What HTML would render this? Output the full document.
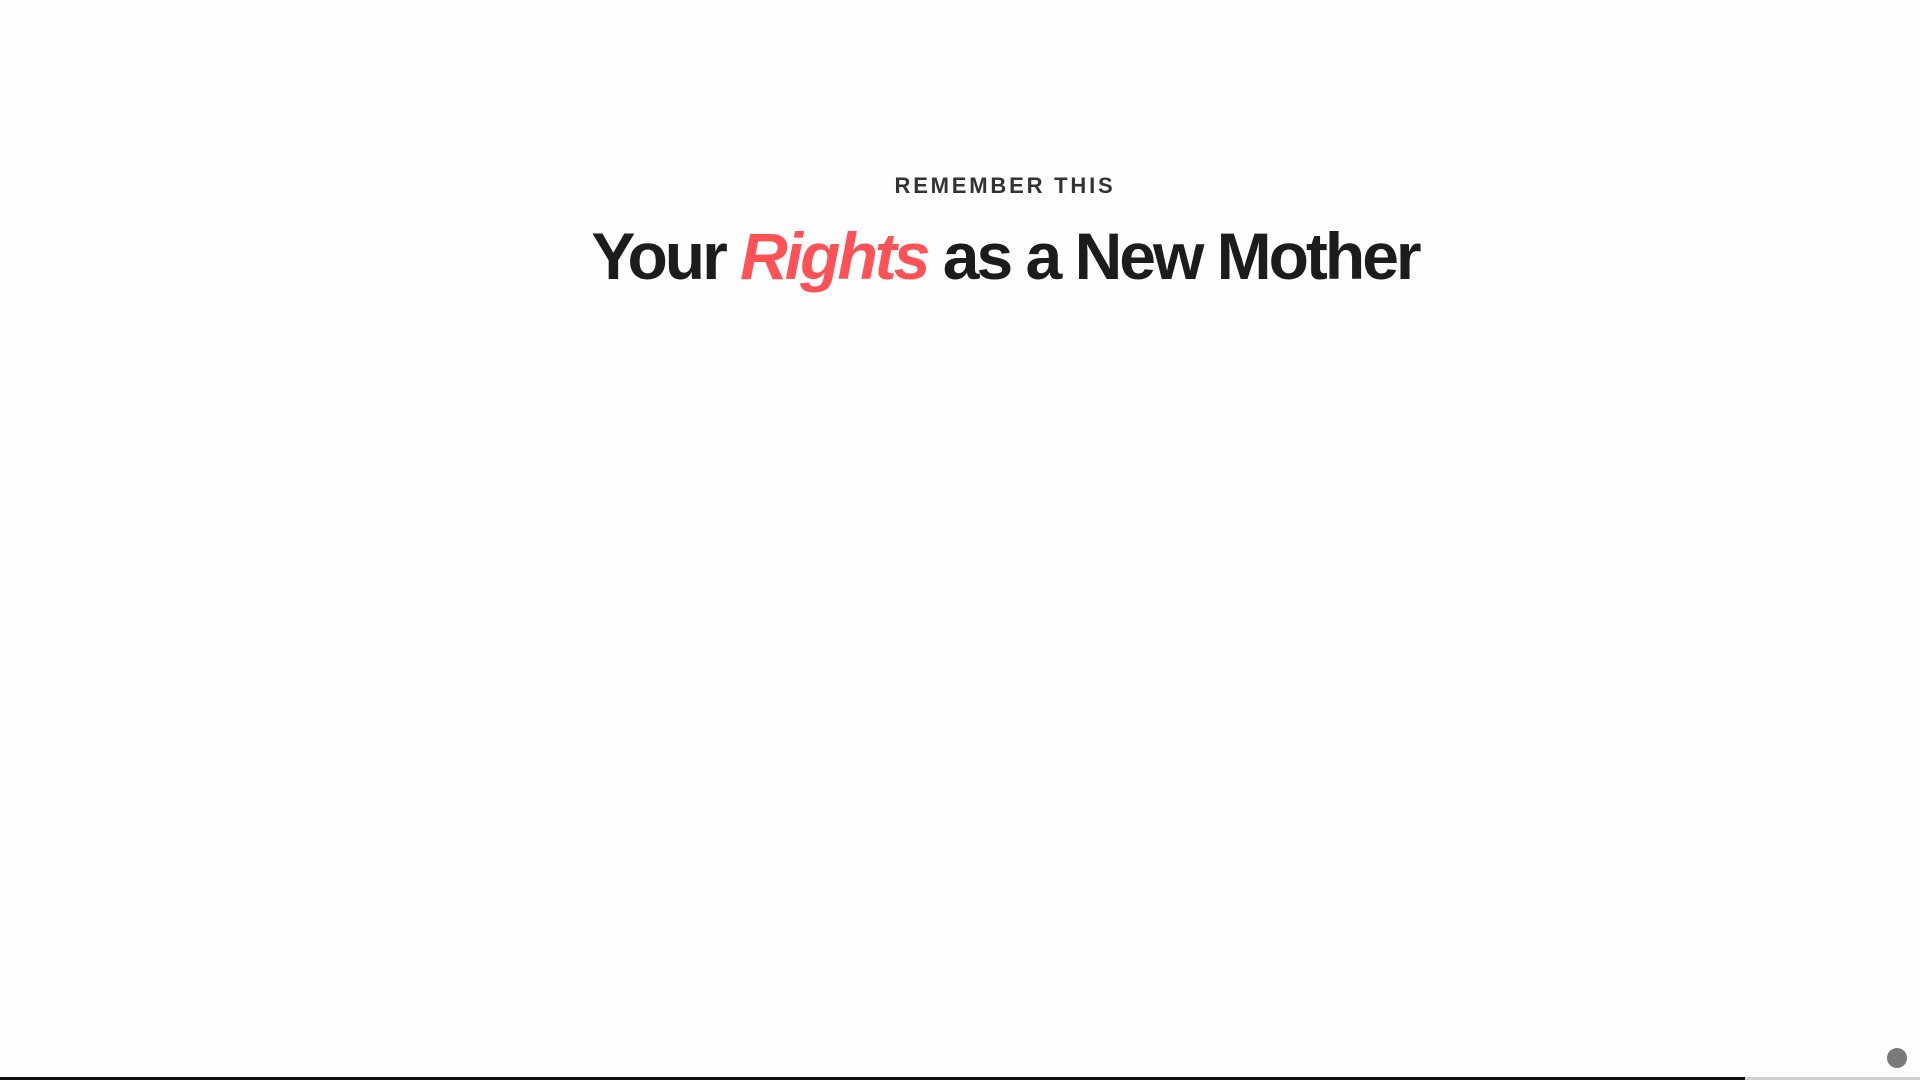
<!DOCTYPE html>
<html><head><meta charset="utf-8"><style>
html,body{margin:0;padding:0;width:1920px;height:1080px;background:#fefefe;overflow:hidden;font-family:"Liberation Sans",sans-serif;}
.wrap{position:absolute;left:90px;width:1830px;text-align:center;}
.label{top:173px;font-size:22px;font-weight:bold;letter-spacing:2.8px;color:#333;}
.h{top:218px;font-size:66px;font-weight:bold;letter-spacing:-3px;color:#1c1c1c;}
.h i{color:#ff5257;}
.bar{position:absolute;left:0;bottom:0;height:3px;width:1920px;background:#d0d0d0;}
.bar div{height:3px;width:1745px;background:#111;}
.dot{position:absolute;left:1887px;top:1048px;width:20px;height:20px;border-radius:50%;background:#7a7a7a;}
</style></head><body>
<div class="wrap label">REMEMBER THIS</div>
<div class="wrap h">Your <i>Rights</i> as a New Mother</div>
<div class="dot"></div>
<div class="bar"><div></div></div>
</body></html>
